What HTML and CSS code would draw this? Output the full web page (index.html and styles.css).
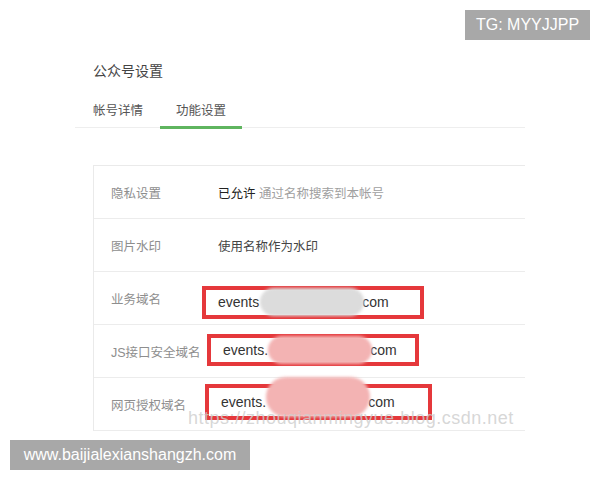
FILE: index.html
```html
<!DOCTYPE html>
<html lang="zh">
<head>
<meta charset="utf-8">
<link rel="stylesheet" href="styles.css">
</head>
<body>
<div class="page">
  <div class="title">公众号设置</div>
  <div class="tabs">
    <div class="tab">帐号详情</div>
    <div class="tab active">功能设置</div>
  </div>
  <div class="card">
    <div class="row">
      <div class="label">隐私设置</div>
      <div class="value"><span class="strong">已允许</span> <span class="desc">通过名称搜索到本帐号</span></div>
    </div>
    <div class="row">
      <div class="label">图片水印</div>
      <div class="value">使用名称作为水印</div>
    </div>
    <div class="row">
      <div class="label">业务域名</div>
      <div class="mark mark-a"><span class="dom">events</span><span class="blob gray"></span><span class="dom">com</span></div>
    </div>
    <div class="row">
      <div class="label">JS接口安全域名</div>
      <div class="mark mark-b"><span class="dom">events.</span><span class="blob pink"></span><span class="dom">com</span></div>
    </div>
    <div class="row">
      <div class="label">网页授权域名</div>
      <div class="mark mark-c"><span class="dom">events.</span><span class="blob pink tall"></span><span class="dom">com</span></div>
    </div>
  </div>
</div>
<div class="watermark">https://zhouqianmingyue.blog.csdn.net</div>
<div class="badge badge-tg">TG: MYYJJPP</div>
<div class="badge badge-site">www.baijialexianshangzh.com</div>
</body>
</html>
```
FILE: styles.css
```css
html, body {
  margin: 0;
  padding: 0;
  background: #ffffff;
  width: 600px;
  height: 480px;
  overflow: hidden;
  font-family: "Liberation Sans", "Noto Sans CJK SC", sans-serif;
}

.page {
  width: 450px;
  margin-left: 75px;
  padding-top: 61px;
}

.title {
  padding-left: 18px;
  font-size: 14px;
  line-height: 20px;
  color: #444;
}

.tabs {
  display: flex;
  margin-top: 18px;
  border-bottom: 1px solid #eeeeee;
}

.tab {
  padding: 0 17px 0 18px;
  font-size: 12.5px;
  line-height: 24px;
  color: #555;
  border-bottom: 3px solid transparent;
  margin-bottom: -2px;
  box-sizing: border-box;
  height: 30px;
}

.tab.active {
  border-bottom-color: #5fb55f;
  padding: 0 16px 0 16px;
}

.card {
  margin-left: 18px;
  margin-top: 37px;
  border-left: 1px solid #eaeaea;
  border-top: 1px solid #eaeaea;
}

.row {
  display: flex;
  align-items: center;
  height: 52px;
  border-bottom: 1px solid #ececec;
}

.label {
  width: 124px;
  flex-shrink: 0;
  padding-left: 17px;
  box-sizing: border-box;
  font-size: 12.5px;
  color: #8e8e8e;
  white-space: nowrap;
}

.value {
  font-size: 12.5px;
  color: #444;
}

.strong {
  color: #222;
}

.desc {
  color: #a0a0a0;
}

.mark {
  display: flex;
  align-items: center;
  flex-shrink: 0;
  border: 4px solid #e5383b;
  box-sizing: border-box;
  height: 33px;
  font-size: 14px;
  color: #333;
  padding-left: 12px;
}

.mark-a {
  width: 222px;
  margin-left: -16px;
  margin-top: 8px;
}

.mark-b {
  width: 212px;
  margin-left: -11px;
  height: 32px;
  margin-top: -3px;
}

.mark-c {
  width: 227px;
  margin-left: -13px;
  height: 36px;
  margin-top: -5px;
}

.dom {
  line-height: 20px;
}

.blob {
  display: block;
  width: 104px;
  height: 28px;
  border-radius: 14px;
  filter: blur(1.5px);
  margin: 0 -2px 0 0;
}

.mark-a .blob {
  margin-left: 1px;
}

.blob.gray {
  background: #dcdcdc;
}

.blob.pink {
  background: #f3b3b3;
}

.blob.tall {
  height: 40px;
  border-radius: 20px;
  margin-top: -10px;
}

.watermark {
  position: absolute;
  left: 188px;
  top: 408px;
  font-size: 18px;
  letter-spacing: 0.5px;
  color: rgba(205, 205, 205, 0.8);
  white-space: nowrap;
}

.badge {
  position: absolute;
  background: #a8a8a8;
  color: #ffffff;
  font-size: 16px;
  height: 30px;
  line-height: 30px;
  box-sizing: border-box;
  text-align: center;
}

.badge-tg {
  left: 465px;
  top: 10px;
  width: 125px;
}

.badge-site {
  left: 10px;
  top: 440px;
  width: 240px;
}
```
